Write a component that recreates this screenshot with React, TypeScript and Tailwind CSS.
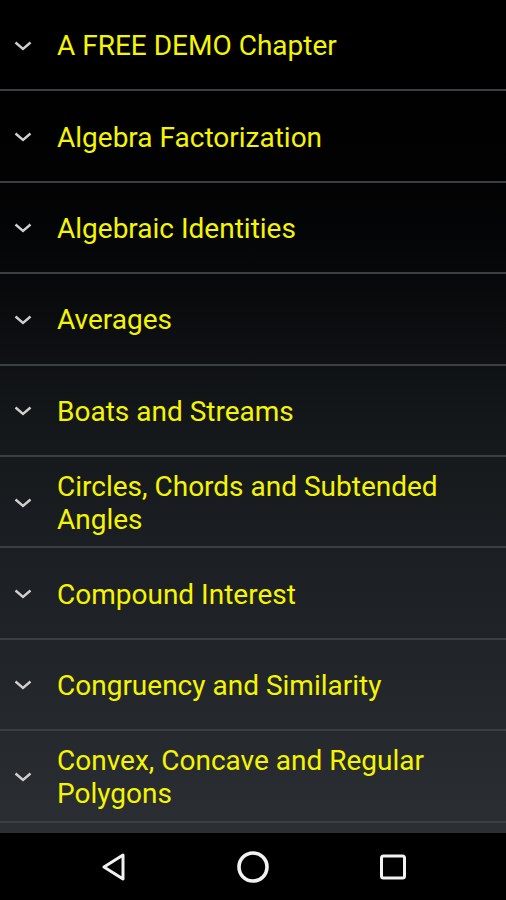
import React from 'react';

const chapters = [
  'A FREE DEMO Chapter',
  'Algebra Factorization',
  'Algebraic Identities',
  'Averages',
  'Boats and Streams',
  'Circles, Chords and Subtended Angles',
  'Compound Interest',
  'Congruency and Similarity',
  'Convex, Concave and Regular Polygons',
];

function Chevron() {
  return (
    <svg width="18" height="10" viewBox="0 0 18 10" className="shrink-0">
      <path d="M1.5 1.5 L9 8 L16.5 1.5" fill="none" stroke="#cfcfcf" strokeWidth="2.4" />
    </svg>
  );
}

export default function App() {
  return (
    <div className="w-[506px] h-[900px] flex flex-col bg-black" style={{ fontFamily: 'Roboto, "Noto Sans", sans-serif' }}>
      <div className="h-[833px] overflow-hidden bg-gradient-to-b from-[#000000] via-[#14171a] to-[#2b2f34]">
        {chapters.map((c) => (
          <div key={c} className="h-[91.4px] flex items-center pt-[2px] border-b-2 border-[#3b3f44]">
            <div className="w-[57px] shrink-0 pl-[14px] flex items-center">
              <Chevron />
            </div>
            <span className="text-[28px] leading-[33px] text-[#f5f500] pr-8">{c}</span>
          </div>
        ))}
      </div>
      <div className="h-[67px] flex items-center pl-[100px] gap-[110px] bg-black">
        <svg width="26" height="28" viewBox="0 0 26 28">
          <path d="M23 2 L4 14 L23 26 Z" fill="none" stroke="#f2f2f2" strokeWidth="3" strokeLinejoin="round" />
        </svg>
        <svg width="34" height="34" viewBox="0 0 34 34">
          <circle cx="17" cy="17" r="14" fill="none" stroke="#f2f2f2" strokeWidth="3.6" />
        </svg>
        <svg width="26" height="26" viewBox="0 0 26 26">
          <rect x="1.5" y="2" width="23" height="22" rx="2" fill="none" stroke="#f2f2f2" strokeWidth="3" />
        </svg>
      </div>
    </div>
  );
}
